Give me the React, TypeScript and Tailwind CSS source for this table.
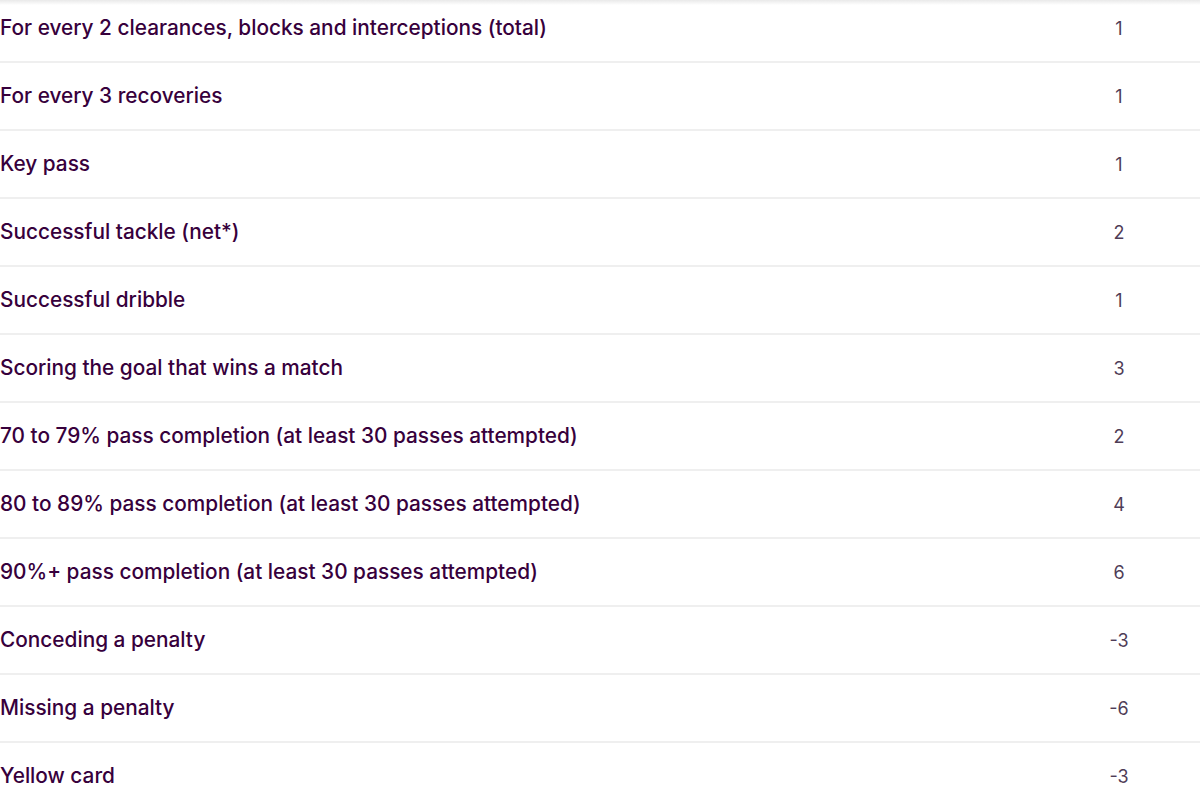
const rows: [string, string][] = [
  ['For every 2 clearances, blocks and interceptions (total)', '1'],
  ['For every 3 recoveries', '1'],
  ['Key pass', '1'],
  ['Successful tackle (net*)', '2'],
  ['Successful dribble', '1'],
  ['Scoring the goal that wins a match', '3'],
  ['70 to 79% pass completion (at least 30 passes attempted)', '2'],
  ['80 to 89% pass completion (at least 30 passes attempted)', '4'],
  ['90%+ pass completion (at least 30 passes attempted)', '6'],
  ['Conceding a penalty', '-3'],
  ['Missing a penalty', '-6'],
  ['Yellow card', '-3'],
]

export default function App() {
  return (
    <div className="relative w-[1200px] h-[800px] overflow-hidden bg-white font-['Inter',sans-serif]">
      <div className="absolute top-0 left-0 right-0 h-[5px] bg-gradient-to-b from-[#e9e9e9] to-white" />
      <div className="-mt-[5px]">
        {rows.map(([label, pts]) => (
          <div key={label} className="grid grid-cols-[1fr_162px] h-[68px] items-center border-b-2 border-[#efefef]">
            <div className="text-[20.8px] font-medium text-[#37003c]">{label}</div>
            <div className="text-center text-[18px] text-[#4f3d57]">{pts}</div>
          </div>
        ))}
      </div>
    </div>
  )
}
